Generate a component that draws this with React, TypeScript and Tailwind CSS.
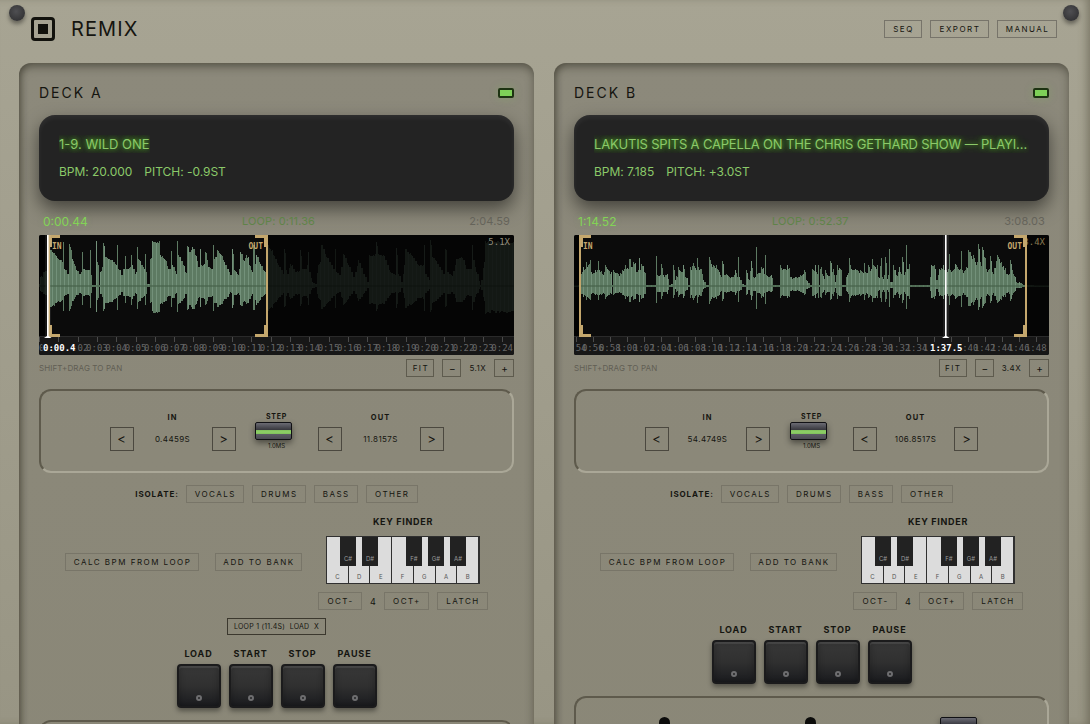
import type { ReactNode } from "react";
import clsx from "clsx";

interface Segment {
  offset: number;
  // flat list of x, edge pairs in thirds of a pixel
  points: number[];
}

interface Deck {
  name: string;
  title: string;
  titleTracking: string;
  bpm: string;
  pitch: string;
  time: string;
  loop: string;
  total: string;
  zoom: string;
  inPoint: string;
  outPoint: string;
  inX: number;
  outX: number;
  playhead: number;
  playheadLabel: string;
  playheadLabelX: number;
  tickStart: number;
  tickGap: number;
  firstSecond: number;
  secondsPerTick: number;
  tickCount: number;
  roughness: number;
  wave: Segment[];
  bank?: string;
}

const MIDLINE = 242;

const WAVE_A: Segment[] = [
  {
    offset: -27,
    points: [
      27, 236, 32, 215, 40, 200, 52, 190, 56, 130, 65, 135, 75, 150, 85, 160,
      95, 165, 98, 170, 100, 110, 103, 190, 112, 205, 117, 200, 118, 115, 122,
      125, 127, 160, 133, 175, 140, 195, 148, 205, 155, 200, 157, 140, 160,
      190, 170, 195, 178, 195, 180, 135, 184, 210, 188, 238, 196, 238, 198,
      108, 201, 170, 206, 180, 208, 238, 212, 200, 217, 185, 219, 112, 223,
      122, 226, 155, 235, 160, 245, 165, 255, 175, 260, 180, 262, 120, 265,
      190, 275, 210, 280, 190, 285, 152, 290, 190, 300, 185, 303, 150, 306,
      180, 315, 205, 319, 200, 321, 125, 325, 160, 335, 180, 344, 190, 346,
      145, 350, 200, 352, 236, 358, 236, 362, 160, 366, 155, 368, 108, 388,
      108, 391, 150, 405, 165, 415, 190, 422, 190, 424, 138, 428, 180, 438,
      205, 441, 190, 443, 108, 446, 150, 460, 180, 467, 200, 471, 190, 473,
      122, 478, 140, 488, 125, 497, 150, 505, 185, 508, 185, 510, 130, 514,
      180, 524, 175, 527, 140, 535, 185, 545, 190, 549, 120, 553, 160, 562,
      135, 572, 145, 582, 170, 592, 190, 602, 210, 606, 200, 608, 130, 613,
      195, 625, 210, 632, 140, 640, 165, 650, 150, 658, 180, 667, 200, 670,
      118, 675, 175, 680, 150, 690, 175, 700, 195, 708, 205, 715, 120, 722,
      130, 730, 150, 745, 180, 760, 205, 764, 130, 770, 195,
    ],
  },
  {
    offset: 723,
    points: [
      21, 205, 30, 175, 45, 200, 60, 195, 62, 135, 66, 190, 80, 190, 84, 140,
      88, 200, 96, 230, 105, 235, 115, 180, 120, 170, 125, 118, 140, 155, 160,
      190, 163, 190, 165, 130, 168, 200, 178, 210, 190, 145, 205, 180, 220,
      215, 235, 165, 250, 205, 262, 230, 268, 150, 288, 145, 290, 110, 294,
      145, 310, 150, 330, 200, 346, 210, 350, 128, 354, 205, 365, 230, 373,
      180, 376, 130, 395, 150, 415, 180, 430, 180, 433, 118, 437, 205, 447,
      225, 452, 105, 456, 155, 465, 165, 490, 205, 495, 205, 497, 130, 501,
      200, 515, 210, 530, 160, 545, 155, 560, 190, 573, 190, 576, 118, 580,
      165, 590, 200, 600, 240, 612, 170, 616, 108, 651, 108, 653, 135, 656,
      108, 702, 108,
    ],
  },
];

const WAVE_B: Segment[] = [
  {
    offset: -27,
    points: [
      27, 241, 46, 240, 48, 205, 55, 185, 65, 170, 75, 165, 80, 200, 90, 195,
      98, 195, 100, 168, 104, 195, 112, 205, 121, 178, 128, 190, 138, 200,
      142, 240, 146, 195, 160, 205, 172, 195, 182, 180, 190, 190, 193, 160,
      197, 160, 200, 185, 206, 170, 215, 200, 220, 195, 222, 158, 226, 195,
      230, 175, 238, 200, 245, 240, 270, 240, 273, 152, 276, 210, 286, 210,
      290, 175, 294, 210, 307, 205, 312, 238, 322, 235, 326, 180, 330, 225,
      340, 185, 348, 200, 355, 180, 362, 215, 370, 240, 376, 185, 385, 172,
      394, 195, 397, 158, 400, 185, 410, 190, 414, 225, 425, 240, 431, 238,
      433, 155, 440, 175, 455, 180, 465, 210, 472, 168, 477, 210, 485, 205,
      500, 215, 510, 195, 517, 215, 520, 155, 523, 215, 532, 235, 541, 240,
      544, 195, 550, 220, 560, 168, 566, 215, 573, 200, 575, 125, 578, 205,
      590, 185, 599, 205, 602, 150, 605, 210, 620, 210, 624, 240, 642, 240,
      647, 178, 655, 190, 668, 180, 675, 215, 690, 215, 705, 210, 718, 195,
      725, 225, 735, 240, 740, 238, 743, 190, 750, 190, 758, 205, 765, 190,
      776, 212,
    ],
  },
  {
    offset: 723,
    points: [
      2, 180, 9, 180, 12, 240, 18, 185, 25, 225, 32, 195, 38, 210, 45, 168, 51,
      200, 55, 190, 60, 230, 66, 180, 75, 190, 82, 240, 90, 240, 93, 215, 98,
      210, 102, 158, 108, 190, 120, 190, 135, 195, 143, 200, 147, 172, 151,
      200, 160, 180, 168, 190, 172, 160, 176, 180, 187, 180, 190, 215, 198,
      158, 203, 215, 209, 210, 212, 155, 217, 220, 221, 210, 223, 132, 226,
      230, 232, 230, 236, 180, 245, 210, 252, 185, 260, 205, 263, 155, 267,
      210, 272, 200, 275, 118, 278, 190, 282, 175, 287, 240, 342, 238, 348,
      178, 358, 180, 364, 225, 372, 190, 385, 178, 395, 195, 400, 190, 403,
      145, 406, 195, 420, 175, 432, 195, 435, 190, 438, 138, 442, 195, 455,
      185, 459, 135, 466, 140, 475, 150, 482, 170, 488, 170, 490, 115, 496,
      170, 501, 125, 508, 155, 515, 190, 524, 190, 527, 152, 533, 200, 546,
      150, 560, 170, 575, 205, 583, 205, 586, 165, 595, 205, 605, 230, 612,
      230, 625, 240, 702, 241,
    ],
  },
];

const DECKS: Deck[] = [
  {
    name: "DECK A",
    title: "1-9. WILD ONE",
    titleTracking: "tracking-normal",
    bpm: "20.000",
    pitch: "-0.9ST",
    time: "0:00.44",
    loop: "0:11.36",
    total: "2:04.59",
    zoom: "5.1X",
    inPoint: "0.4459S",
    outPoint: "11.8157S",
    inX: 9,
    outX: 229,
    playhead: 8,
    playheadLabel: "0:00.4",
    playheadLabelX: 4,
    tickStart: 0,
    tickGap: 19.3,
    firstSecond: 0,
    secondsPerTick: 1,
    tickCount: 25,
    roughness: 0.05,
    wave: WAVE_A,
    bank: "LOOP 1 (11.4S)",
  },
  {
    name: "DECK B",
    title: "LAKUTIS SPITS A CAPELLA ON THE CHRIS GETHARD SHOW — PLAYING LIVE",
    titleTracking: "tracking-[-0.18px]",
    bpm: "7.185",
    pitch: "+3.0ST",
    time: "1:14.52",
    loop: "0:52.37",
    total: "3:08.03",
    zoom: "3.4X",
    inPoint: "54.4749S",
    outPoint: "106.8517S",
    inX: 5,
    outX: 453,
    playhead: 371,
    playheadLabel: "1:37.5",
    playheadLabelX: 356,
    tickStart: 1.7,
    tickGap: 17.04,
    firstSecond: 54,
    secondsPerTick: 2,
    tickCount: 28,
    roughness: 0.25,
    wave: WAVE_B,
  },
];

function sampleAt(segments: Segment[], x: number) {
  const flat: [number, number][] = [];
  segments.forEach(({ offset, points }) => {
    for (let i = 0; i < points.length; i += 2) {
      flat.push([(points[i] + offset) / 3, (MIDLINE - points[i + 1]) / 3]);
    }
  });
  // narrow transients fall between columns, so keep the tallest one
  const inside = flat.filter((p) => p[0] >= x && p[0] < x + 1);
  if (inside.length) {
    return { peak: Math.max(...inside.map((p) => p[1])), exact: true };
  }
  const next = flat.findIndex((p) => p[0] > x);
  if (next < 1) {
    return { peak: flat[next === 0 ? 0 : flat.length - 1][1], exact: true };
  }
  const [x0, a0] = flat[next - 1];
  const [x1, a1] = flat[next];
  // two-pixel steps between samples
  const at = Math.max(x0, x - (x % 2));
  return { peak: a0 + ((a1 - a0) * (at - x0)) / (x1 - x0), exact: false };
}

function noise(n: number) {
  const v = Math.sin(n * 12.9898) * 43758.5453;
  return v - Math.floor(v);
}

function formatTime(seconds: number) {
  return `${Math.floor(seconds / 60)}:${String(seconds % 60).padStart(2, "0")}`;
}

function Waveform({ deck }: { deck: Deck }) {
  const columns = Array.from({ length: 475 }, (_, x) => {
    const { peak, exact } = sampleAt(deck.wave, x);
    const jitter = exact ? 0 : deck.roughness * noise(x) * 0.8;
    const top = Math.max(0.5, peak * (1 - jitter));
    const bottom = Math.max(
      0.5,
      peak * 0.62 * (1 - jitter - 0.1 * noise((x >> 1) + 900)),
    );
    return { x, top, bottom };
  });
  const ticks = Array.from({ length: deck.tickCount }, (_, i) => ({
    x: deck.tickStart + i * deck.tickGap,
    label: formatTime(deck.firstSecond + i * deck.secondsPerTick),
  }));
  const { inX, outX, playhead } = deck;

  return (
    <svg
      viewBox="0 0 475 120"
      className="block h-[120px] w-[475px] rounded-[2px] bg-[#0b0b0b] font-['DejaVu_Sans_Mono',monospace]"
    >
      <g shapeRendering="crispEdges">
        {columns.map(({ x, top, bottom }) => (
          <rect
            key={x}
            x={x}
            y={51 - top}
            width="1"
            height={top + bottom}
            fill={x % 4 === 1 ? "#73917a" : "#5d7a62"}
          />
        ))}
        <rect x="0" y="50" width="475" height="2" fill="#466049" opacity="0.6" />
        <rect x="0" y="0" width={inX} height="101" fill="#000" opacity="0.8" />
        <rect
          x={outX}
          y="0"
          width={475 - outX}
          height="101"
          fill="#050505"
          opacity="0.84"
        />
        <rect x="0" y="101" width="475" height="19" fill="#171717" />
        <rect x="0" y="101" width="475" height="1" fill="#2a2a2a" />
        {ticks.map(({ x, label }) => (
          <rect key={label} x={x} y="102" width="1" height="5" fill="#4a4a4a" />
        ))}
      </g>
      <g fontSize="9" fill="#666" textAnchor="middle">
        {ticks.map(({ x, label }) => (
          <text key={label} x={x} y="116">
            {label}
          </text>
        ))}
      </g>
      <text
        x="471"
        y="10"
        fontSize="9"
        textAnchor="end"
        fill={deck.name === "DECK A" ? "#928d7b" : "#8a7a50"}
      >
        {deck.zoom}
      </text>
      <g fill="#c4a76d" shapeRendering="crispEdges">
        <rect x={inX} y="0" width="2" height="101" />
        <path d={`M${inX} 0h12v3h-8v9h-4zM${inX} 102h12v-3h-8v-9h-4z`} />
        <rect x={outX - 2} y="0" width="2" height="101" />
        <path d={`M${outX} 0h-13v3h9v9h4zM${outX} 102h-13v-3h9v-9h4z`} />
      </g>
      <g fontSize="8" fontWeight="bold" fill="#c4a76d">
        <text x={inX + 4} y="14">
          IN
        </text>
        <text x={outX - 5} y="14" textAnchor="end">
          OUT
        </text>
      </g>
      <rect
        x={playhead - 2}
        y="0"
        width="6"
        height="101"
        fill="#fff"
        opacity="0.08"
      />
      <path d={`M${playhead} 0h1.6v101l3 2h-7.6l3-2z`} fill="#fff" />
      <rect
        x={deck.playheadLabelX - 0.5}
        y="108"
        width="33"
        height="11"
        fill="#171717"
      />
      <text
        x={deck.playheadLabelX}
        y="116"
        fontSize="9"
        fontWeight="bold"
        fill="#fff"
      >
        {deck.playheadLabel}
      </text>
    </svg>
  );
}

function OutlineButton({
  className,
  children,
}: {
  className?: string;
  children: ReactNode;
}) {
  return (
    <button
      className={clsx(
        "flex h-[18px] shrink-0 items-center justify-center border pl-px text-[8px] leading-none tracking-[1.5px] whitespace-nowrap",
        className,
      )}
    >
      {children}
    </button>
  );
}

function Nudge({ label, value }: { label: string; value: string }) {
  return (
    <div className="flex w-[126px] flex-col items-center">
      <div className="mt-px mb-[3px] h-3 text-[7.5px] leading-[12px] font-bold tracking-[1px]">
        {label}
      </div>
      <div className="flex w-full items-center justify-between">
        <button className="h-6 w-6 border border-[#4b483f] text-[13px] leading-none">
          &lt;
        </button>
        <span className="text-[8px] tracking-[0.4px]">{value}</span>
        <button className="h-6 w-6 border border-[#4b483f] text-[13px] leading-none">
          &gt;
        </button>
      </div>
    </div>
  );
}

function SliderSwitch() {
  return (
    <div className="h-[18px] w-[37px] shrink-0 rounded-[2px] border border-[#101014] bg-[linear-gradient(180deg,#6b6b73_0px,#54545c_3px,#36363c_7px,#7ec05a_7px,#8fd068_9px,#7ec05a_11px,#5d5d66_11px,#4a4a52_16px)] shadow-[0_3px_6px_rgba(0,0,0,0.45)]" />
  );
}

const WHITE_KEYS = ["C", "D", "E", "F", "G", "A", "B"];
const BLACK_KEYS = [
  { note: "C#", position: "left-[13px]" },
  { note: "D#", position: "left-[35px]" },
  { note: "F#", position: "left-[79px]" },
  { note: "G#", position: "left-[101px]" },
  { note: "A#", position: "left-[123px]" },
];

function Piano() {
  return (
    <div className="relative flex h-12 w-[154px] border border-[#303030] bg-[#303030]">
      {WHITE_KEYS.map((note) => (
        <div
          key={note}
          className="flex flex-1 items-end justify-center border-r border-[#303030] bg-[#dcdcdc] pb-[3px] text-[6px] leading-[6px] text-[#555] last:border-r-0"
        >
          {note}
        </div>
      ))}
      {BLACK_KEYS.map(({ note, position }) => (
        <div
          key={note}
          className={clsx(
            "absolute top-0 flex h-[29px] w-4 items-end justify-center bg-[#222] pb-[4px] text-[6px] leading-[6px] text-[#999]",
            position,
          )}
        >
          {note}
        </div>
      ))}
    </div>
  );
}

function Pad({ label }: { label: string }) {
  return (
    <div className="flex w-11 flex-col items-center">
      <div className="h-[17px] pt-px text-[9px] leading-[12px] font-bold tracking-[0.9px] whitespace-nowrap">
        {label}
      </div>
      <button className="flex h-11 w-11 items-end justify-center rounded-[4px] border-2 border-[#1b1b1c] bg-linear-to-b from-[#383838] via-[#303030] to-[#1b1c1f] pb-[5px] shadow-[0_3px_5px_rgba(0,0,0,0.4),inset_0_2px_1px_rgba(255,255,255,0.1),inset_0_0_6px_rgba(0,0,0,0.3)]">
        <span className="h-1.5 w-1.5 rounded-full border-2 border-[#6e6e70]" />
      </button>
    </div>
  );
}

const BOX =
  "shrink-0 rounded-xl border-2 border-t-[#5e5a4c] border-l-[#5e5a4c] border-r-[#aaa797] border-b-[#aaa797]";

function DeckPanel({ deck }: { deck: Deck }) {
  return (
    <section className="flex h-[800px] w-[515px] shrink-0 flex-col rounded-xl bg-linear-to-b from-[#8c897b] to-[#8a8777] px-5 pt-5 shadow-[inset_0_4px_8px_rgba(50,47,35,0.5),inset_4px_0_6px_-2px_rgba(50,47,35,0.4)]">
      <div className="flex h-5 items-center justify-between">
        <h2 className="text-sm tracking-[2px]">{deck.name}</h2>
        <span className="h-[10px] w-4 rounded-[2px] border-2 border-[#1d3312] bg-[#7ed058] shadow-[0_0_10px_rgba(120,200,80,0.25)]" />
      </div>

      <div className="mt-3 h-[86px] shrink-0 rounded-2xl bg-[#232323] px-5 pt-5 text-[#8bc969] shadow-[0_8px_18px_rgba(0,0,0,0.5),inset_0_3px_5px_rgba(255,255,255,0.06)]">
        <div className="flex">
          <div
            className={clsx(
              "truncate text-[13px] leading-[18px] [text-shadow:0_0_4px_#4f9a2a,0_0_8px_#4fb81c]",
              deck.titleTracking,
            )}
          >
            {deck.title}
          </div>
        </div>
        <div className="mt-[10px] flex gap-3 text-xs leading-[18px] tracking-[-0.03px]">
          <span>BPM: {deck.bpm}</span>
          <span>PITCH: {deck.pitch}</span>
        </div>
      </div>

      <div className="mt-[13px] flex h-[14px] justify-between px-1 text-[11px] leading-[14px] text-[#65635a]">
        <span className="text-xs text-[#83d356] [text-shadow:0_0_6px_rgba(120,210,70,0.25)]">
          {deck.time}
        </span>
        <span className="tracking-[0.1px] text-[#5f8348]">
          LOOP: {deck.loop}
        </span>
        <span className="tracking-[0.1px]">{deck.total}</span>
      </div>

      <div className="mt-[7px]">
        <Waveform deck={deck} />
      </div>

      <div className="mt-1 flex h-[18px] items-center gap-2">
        <span className="mr-auto text-[8px] tracking-[0.1px] text-[#615e54]">
          SHIFT+DRAG TO PAN
        </span>
        <OutlineButton className="w-7 border-[#5e5b4e] text-[8.5px] tracking-[0.2px]">
          FIT
        </OutlineButton>
        <OutlineButton className="w-[19px] border-[#5e5b4e] text-[10px] tracking-normal">
          −
        </OutlineButton>
        <span className="text-[8px] tracking-[0.4px]">{deck.zoom}</span>
        <OutlineButton className="w-5 border-[#5e5b4e] text-[10px] tracking-normal">
          +
        </OutlineButton>
      </div>

      <div
        className={clsx(BOX, "mt-3 flex h-[84px] justify-center gap-5 pt-5")}
      >
        <Nudge label="IN" value={deck.inPoint} />
        <div className="flex w-[42px] flex-col items-center">
          <div className="h-[11px] text-[7px] leading-[11px] font-bold tracking-[0.8px]">
            STEP
          </div>
          <div className="-ml-[7px]">
            <SliderSwitch />
          </div>
          <div className="mt-[3px] text-[6px] leading-[6px]">1.0MS</div>
        </div>
        <Nudge label="OUT" value={deck.outPoint} />
      </div>

      <div className="mt-3 flex h-[18px] items-center justify-center gap-2">
        <span className="-mr-px text-[8px] font-bold tracking-[0.9px]">
          ISOLATE:
        </span>
        <OutlineButton className="w-[58px] border-[#787568]">
          VOCALS
        </OutlineButton>
        <OutlineButton className="w-[54px] border-[#787568]">
          DRUMS
        </OutlineButton>
        <OutlineButton className="w-11 border-[#787568]">BASS</OutlineButton>
        <OutlineButton className="w-[52px] border-[#787568]">
          OTHER
        </OutlineButton>
      </div>

      <div className="mt-3 flex h-[95px] items-center justify-center gap-4">
        <OutlineButton className="mb-0.5 w-[134px] border-[#787568] pl-[3px]">
          CALC BPM FROM LOOP
        </OutlineButton>
        <OutlineButton className="mb-0.5 w-[87px] border-[#787568]">
          ADD TO BANK
        </OutlineButton>
        <div className="flex w-[170px] flex-col items-center">
          <div className="h-[21px] text-[9px] leading-[13px] font-bold tracking-[0.7px]">
            KEY FINDER
          </div>
          <Piano />
          <div className="mt-2 flex w-full items-center gap-2">
            <OutlineButton className="w-11 border-[#787568]">
              OCT-
            </OutlineButton>
            <span className="w-[7px] text-center text-[9px] leading-none">
              4
            </span>
            <OutlineButton className="w-[45px] border-[#787568]">
              OCT+
            </OutlineButton>
            <OutlineButton className="w-[51px] border-[#787568]">
              LATCH
            </OutlineButton>
          </div>
        </div>
      </div>

      {deck.bank && (
        <div className="mx-auto mt-2 -mb-[1px] flex h-[17px] w-[99px] shrink-0 items-center justify-between border border-[#3b382e] px-1.5 text-[7px] leading-none tracking-[0.25px] whitespace-nowrap">
          <span>{deck.bank}</span>
          <span>LOAD</span>
          <span>X</span>
        </div>
      )}

      <div className="mt-[13px] flex justify-center gap-2">
        <Pad label="LOAD" />
        <Pad label="START" />
        <Pad label="STOP" />
        <Pad label="PAUSE" />
      </div>

      <div className={clsx(BOX, "mt-3 flex h-[120px] pt-[19px]")}>
        <span className="ml-[83px] h-20 w-[11px] rounded-full bg-[#0c0c0b]" />
        <span className="ml-[135px] h-20 w-[11px] rounded-full bg-[#0c0c0b]" />
        <span className="ml-[124px]">
          <SliderSwitch />
        </span>
      </div>
    </section>
  );
}

function Screw() {
  return (
    <span className="h-4 w-4 rounded-full bg-[radial-gradient(circle_at_45%_40%,#4f4f52,#333335_75%)] shadow-[0_3px_4px_rgba(0,0,0,0.4)]" />
  );
}

export default function App() {
  return (
    <div className="relative h-[724px] w-[1090px] overflow-hidden bg-linear-to-b from-[#a7a493] via-[#a09d8c] to-[#989584] font-['Inter',sans-serif] text-[#151510] shadow-[inset_-6px_0_8px_-3px_rgba(70,66,50,0.45)]">
      <div className="absolute inset-x-0 top-[5px] flex justify-between pr-[11px] pl-[9px]">
        <Screw />
        <Screw />
      </div>

      <header className="flex h-[63px] items-start justify-between pr-[33px] pl-[31px]">
        <div className="flex h-[58px] items-center gap-4">
          <div className="flex h-6 w-6 items-center justify-center rounded-[4px] border-[3px] border-[#12120d]">
            <div className="h-[10px] w-[10px] bg-[#12120d]" />
          </div>
          <h1 className="text-xl tracking-[1.1px]">REMIX</h1>
        </div>
        <nav className="mt-5 flex gap-2">
          <OutlineButton className="w-[38px] border-[#77746a]">
            SEQ
          </OutlineButton>
          <OutlineButton className="w-[59px] border-[#77746a]">
            EXPORT
          </OutlineButton>
          <OutlineButton className="w-[60px] border-[#77746a]">
            MANUAL
          </OutlineButton>
        </nav>
      </header>

      <main className="flex gap-5 pl-[19px]">
        {DECKS.map((deck) => (
          <DeckPanel key={deck.name} deck={deck} />
        ))}
      </main>
    </div>
  );
}
